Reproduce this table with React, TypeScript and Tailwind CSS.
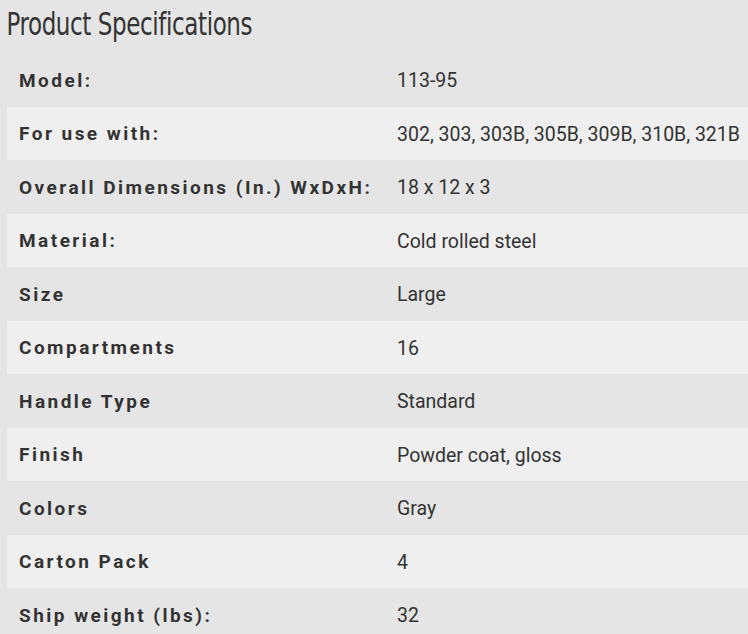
const specs: [string, string][] = [
  ["Model:", "113-95"],
  ["For use with:", "302, 303, 303B, 305B, 309B, 310B, 321B"],
  ["Overall Dimensions (In.) WxDxH:", "18 x 12 x 3"],
  ["Material:", "Cold rolled steel"],
  ["Size", "Large"],
  ["Compartments", "16"],
  ["Handle Type", "Standard"],
  ["Finish", "Powder coat, gloss"],
  ["Colors", "Gray"],
  ["Carton Pack", "4"],
  ["Ship weight (lbs):", "32"],
];

export default function App() {
  return (
    <div className="w-[748px] h-[634px] overflow-hidden bg-[#e5e5e5] text-[#333333] font-['Roboto',sans-serif]">
      <h2 className="pl-[8px] pt-[5px] h-[53px] text-[32px] leading-[38px] font-['DejaVu_Sans_Condensed',sans-serif] font-normal origin-left scale-x-[0.8] tracking-[-0.5px] whitespace-nowrap">
        Product Specifications
      </h2>
      <div className="ml-[7px] w-[760px]">
        {specs.map(([label, value], i) => (
          <div
            key={label}
            className={`flex items-center pt-[2px] h-[53.5px] ${i % 2 === 1 ? "bg-[#efefef]" : "bg-[#e5e5e5]"}`}
          >
            <div className="w-[378px] pl-[12px] text-[19px] font-bold tracking-[0.13em] whitespace-nowrap">
              {label}
            </div>
            <div className="pl-[12px] text-[19.5px] whitespace-nowrap">{value}</div>
          </div>
        ))}
      </div>
    </div>
  );
}
